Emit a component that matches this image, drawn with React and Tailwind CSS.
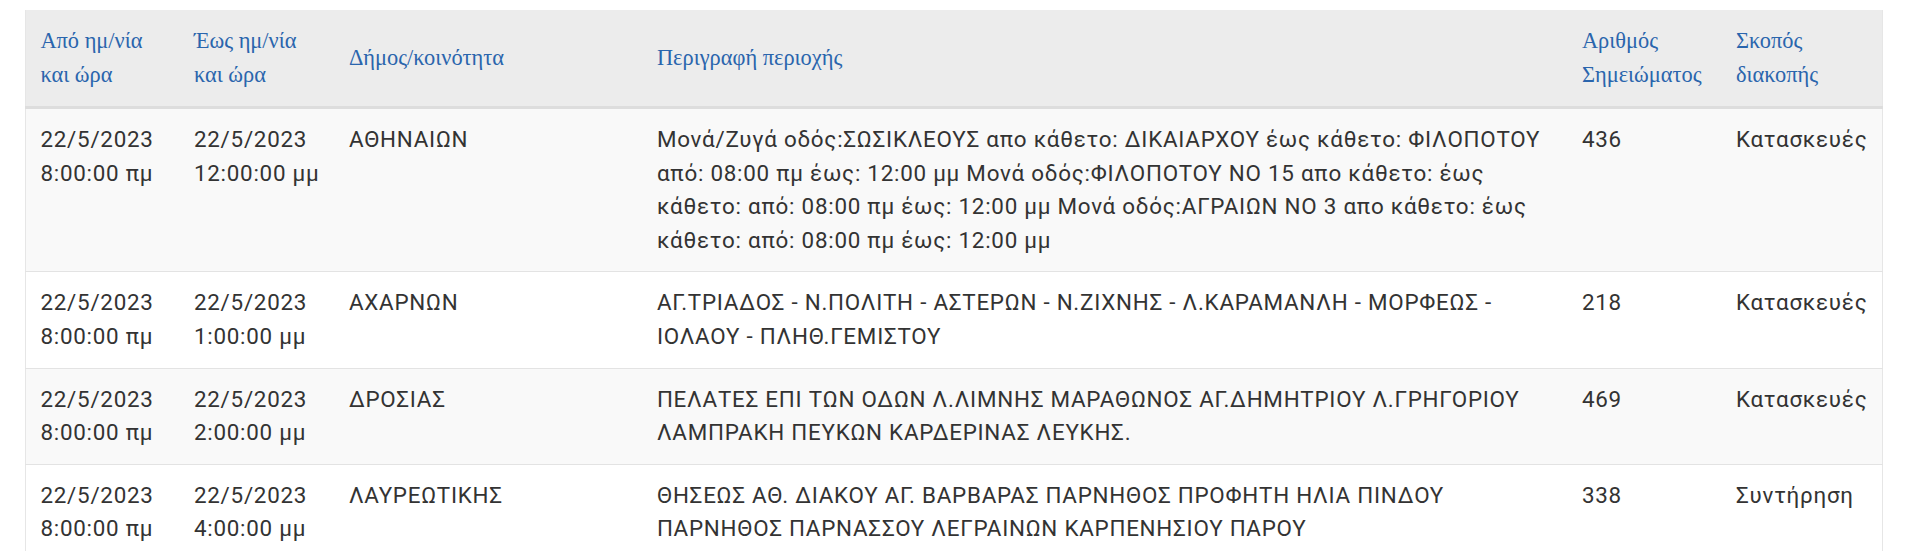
import React from 'react';

const columns = [
  { title: ['Από ημ/νία', 'και ώρα'], width: 'w-[154px]' },
  { title: ['Έως ημ/νία', 'και ώρα'], width: 'w-[155px]' },
  { title: ['Δήμος/κοινότητα'], width: 'w-[308px]' },
  { title: ['Περιγραφή περιοχής'], width: 'w-[925px]' },
  { title: ['Αριθμός', 'Σημειώματος'], width: 'w-[154px]' },
  { title: ['Σκοπός', 'διακοπής'], width: 'w-[161px]' }
];

const rows = [
  {
    from: ['22/5/2023', '8:00:00 πμ'],
    to: ['22/5/2023', '12:00:00 μμ'],
    municipality: 'ΑΘΗΝΑΙΩΝ',
    description:
      'Μονά/Ζυγά οδός:ΣΩΣΙΚΛΕΟΥΣ απο κάθετο: ΔΙΚΑΙΑΡΧΟΥ έως κάθετο: ΦΙΛΟΠΟΤΟΥ από: 08:00 πμ έως: 12:00 μμ Μονά οδός:ΦΙΛΟΠΟΤΟΥ ΝΟ 15 απο κάθετο: έως κάθετο: από: 08:00 πμ έως: 12:00 μμ Μονά οδός:ΑΓΡΑΙΩΝ ΝΟ 3 απο κάθετο: έως κάθετο: από: 08:00 πμ έως: 12:00 μμ',
    note: '436',
    purpose: 'Κατασκευές'
  },
  {
    from: ['22/5/2023', '8:00:00 πμ'],
    to: ['22/5/2023', '1:00:00 μμ'],
    municipality: 'ΑΧΑΡΝΩΝ',
    description:
      'ΑΓ.ΤΡΙΑΔΟΣ - Ν.ΠΟΛΙΤΗ - ΑΣΤΕΡΩΝ - Ν.ΖΙΧΝΗΣ - Λ.ΚΑΡΑΜΑΝΛΗ - ΜΟΡΦΕΩΣ - ΙΟΛΑΟΥ - ΠΛΗΘ.ΓΕΜΙΣΤΟΥ',
    note: '218',
    purpose: 'Κατασκευές'
  },
  {
    from: ['22/5/2023', '8:00:00 πμ'],
    to: ['22/5/2023', '2:00:00 μμ'],
    municipality: 'ΔΡΟΣΙΑΣ',
    description:
      'ΠΕΛΑΤΕΣ ΕΠΙ ΤΩΝ ΟΔΩΝ Λ.ΛΙΜΝΗΣ ΜΑΡΑΘΩΝΟΣ ΑΓ.ΔΗΜΗΤΡΙΟΥ Λ.ΓΡΗΓΟΡΙΟΥ ΛΑΜΠΡΑΚΗ ΠΕΥΚΩΝ ΚΑΡΔΕΡΙΝΑΣ ΛΕΥΚΗΣ.',
    note: '469',
    purpose: 'Κατασκευές'
  },
  {
    from: ['22/5/2023', '8:00:00 πμ'],
    to: ['22/5/2023', '4:00:00 μμ'],
    municipality: 'ΛΑΥΡΕΩΤΙΚΗΣ',
    description:
      'ΘΗΣΕΩΣ ΑΘ. ΔΙΑΚΟΥ ΑΓ. ΒΑΡΒΑΡΑΣ ΠΑΡΝΗΘΟΣ ΠΡΟΦΗΤΗ ΗΛΙΑ ΠΙΝΔΟΥ ΠΑΡΝΗΘΟΣ ΠΑΡΝΑΣΣΟΥ ΛΕΓΡΑΙΝΩΝ ΚΑΡΠΕΝΗΣΙΟΥ ΠΑΡΟΥ',
    note: '338',
    purpose: 'Συντήρηση'
  }
];

const cell = 'px-[14.4px] py-[14px] align-top tracking-[0.75px]';

const Lines = ({ lines }) =>
  lines.map((line, i) => (
    <React.Fragment key={i}>
      {i > 0 && <br />}
      {line}
    </React.Fragment>
  ));

export default function App() {
  return (
    <div className="min-h-[551px] bg-white pt-[10px] pl-[25px] pr-[38px] font-['Roboto',sans-serif] text-[22.4px] leading-[33.6px] text-[#333]">
      <table className="w-full table-fixed border-collapse border-x border-[#e6e6e6]">
        <thead>
          <tr className="bg-[#ececec] border-b-[3px] border-[#dddddd]">
            {columns.map((col, i) => (
              <th
                key={i}
                className={`${col.width} px-[14.4px] py-[14.4px] text-left align-middle font-normal font-['Liberation_Serif',serif] text-[#2a65ad]`}
              >
                <Lines lines={col.title} />
              </th>
            ))}
          </tr>
        </thead>
        <tbody>
          {rows.map((row, i) => (
            <tr
              key={i}
              className={`${i % 2 === 0 ? 'bg-[#f9f9f9]' : 'bg-white'} border-t border-[#e3e3e3]`}
            >
              <td className={cell}>
                <Lines lines={row.from} />
              </td>
              <td className={cell}>
                <Lines lines={row.to} />
              </td>
              <td className={cell}>{row.municipality}</td>
              <td className={cell}>{row.description}</td>
              <td className={cell}>{row.note}</td>
              <td className={cell}>{row.purpose}</td>
            </tr>
          ))}
        </tbody>
      </table>
    </div>
  );
}
